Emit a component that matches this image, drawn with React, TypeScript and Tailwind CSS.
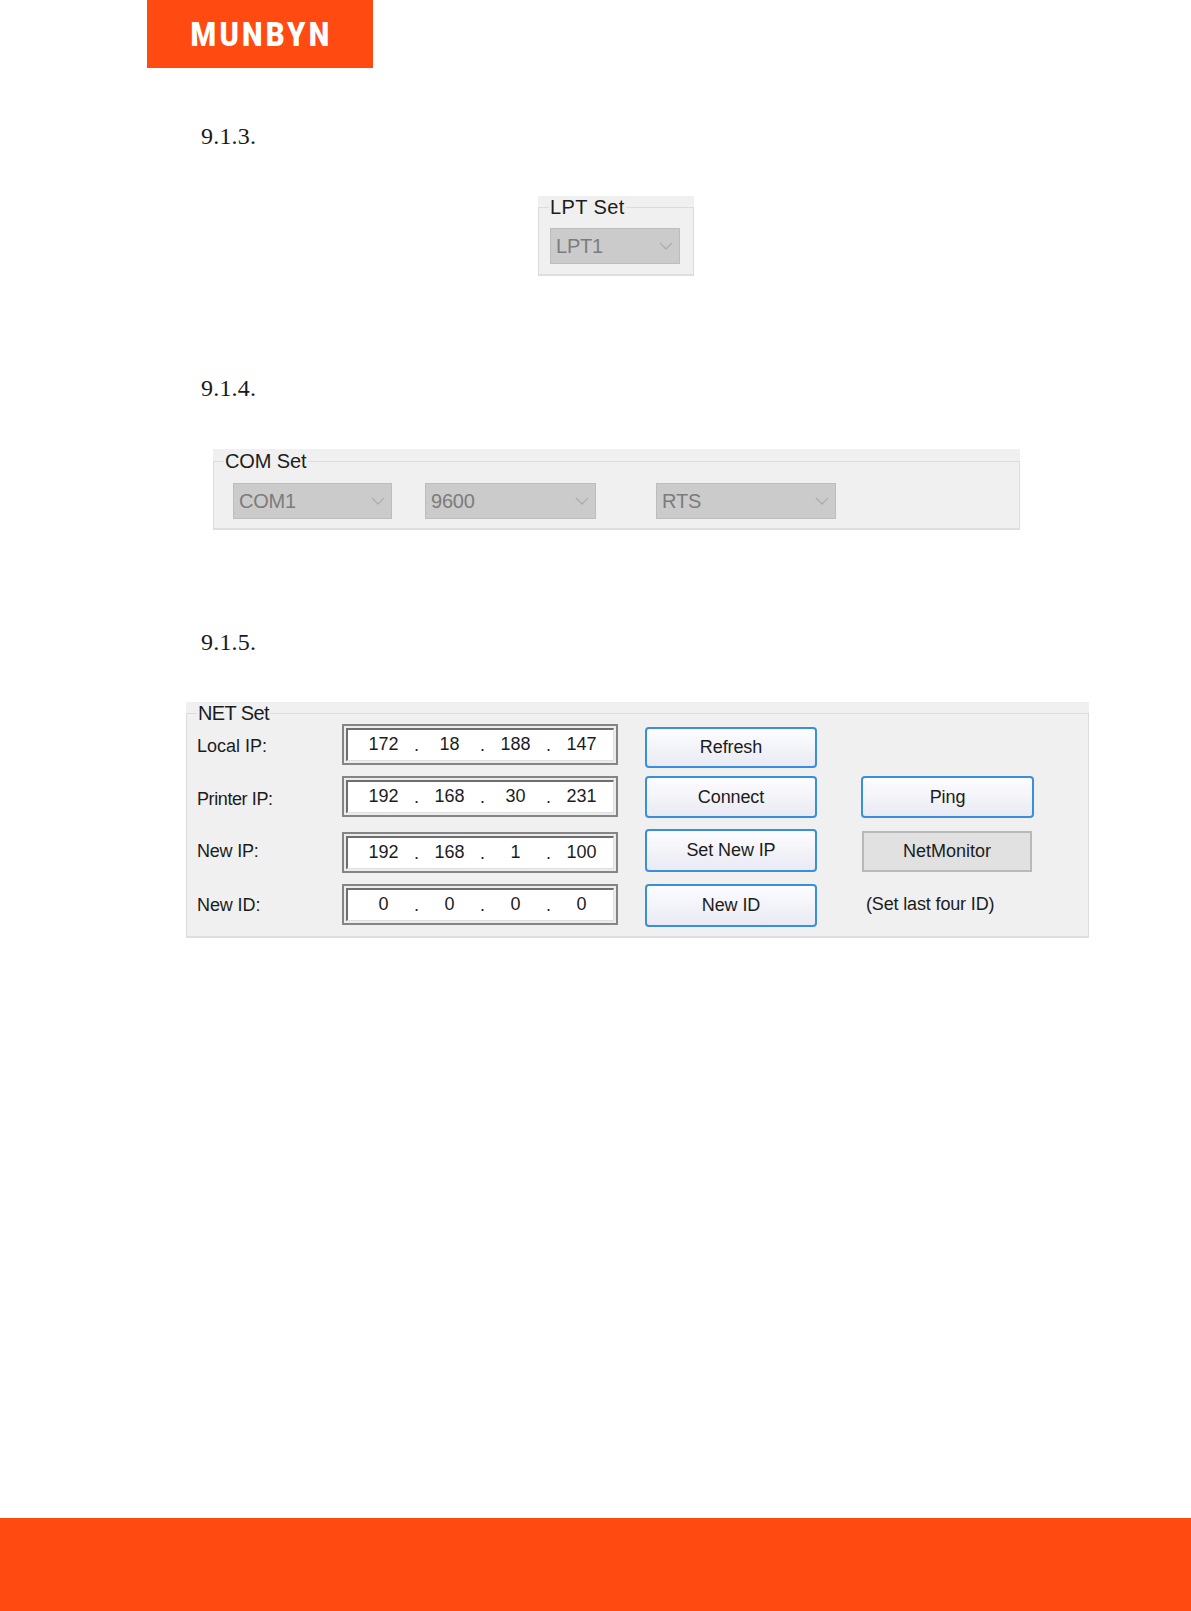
import type { ReactNode } from "react"

const sans = "font-['Liberation_Sans',Arial,sans-serif]"

function Chevron() {
  return (
    <svg width="14" height="8" viewBox="0 0 14 8" fill="none" className="shrink-0">
      <polyline points="1,1 7,7 13,1" stroke="#adadad" strokeWidth="1.3" />
    </svg>
  )
}

function Combo({ label, width, gap }: { label: string; width: string; gap?: string }) {
  return (
    <div className={`${width} ${gap ?? ""} h-[36px] flex items-center justify-between pl-[5px] pr-[6px] bg-[#cbcbcb] border border-[#bdbdbd] text-[20px] tracking-[-0.2px] text-[#7c7c7c]`}>
      <span>{label}</span>
      <Chevron />
    </div>
  )
}

function GroupBox({ title, className, legendClass, children }: { title: string; className: string; legendClass: string; children: ReactNode }) {
  return (
    <div className={`${className} bg-[#f0f0f0] border-b-2 border-[#dedede] ${sans}`}>
      <fieldset className="h-full border-t border-l border-r border-[#dcdcdc] min-w-0">
        <legend className={`${legendClass} ml-[10px] px-[1px] text-[20px] text-[#1c1c1c]`}>{title}</legend>
        {children}
      </fieldset>
    </div>
  )
}

function IpField({ values, top }: { values: string[]; top?: string }) {
  return (
    <div className={`${top ?? ""} w-[276px] h-[41px] border-2 border-[#858585] p-[2px] bg-[#ececec] shrink-0`}>
      <div className="h-full flex justify-center items-center pl-[4px] bg-white border-t-2 border-l-2 border-t-[#6e6e6e] border-l-[#6e6e6e] border-b border-r border-b-[#e0e0e0] border-r-[#e0e0e0] text-[18px] text-[#1c1c1c]">
        {values.map((v, i) => (
          <div key={i} className="flex items-center">
            {i > 0 && <span className="w-[10px] text-center">.</span>}
            <span className="w-[56px] text-center -mt-[2px]">{v}</span>
          </div>
        ))}
      </div>
    </div>
  )
}

function BlueButton({ label, className }: { label: string; className: string }) {
  return (
    <div className={`${className} flex items-center justify-center rounded-[4px] border-2 border-[#3a8fdc] bg-gradient-to-b from-[#fdfdff] to-[#e9eaf3] text-[18px] tracking-[-0.1px] text-[#1c1c1c] shrink-0`}>
      {label}
    </div>
  )
}

function NetRow({ label, labelClass, values, fieldTop, button, extra, rowMt }: { label: string; labelClass: string; values: string[]; fieldTop?: string; button: ReactNode; extra?: ReactNode; rowMt: string }) {
  return (
    <div className={`${rowMt} flex items-start`}>
      <div className={`${labelClass} w-[145px] h-[41px] flex items-center text-[18px] text-[#1c1c1c] shrink-0`}>{label}</div>
      <IpField values={values} top={fieldTop} />
      {button}
      {extra}
    </div>
  )
}

function Heading({ children, className }: { children: string; className: string }) {
  return <p className={`${className} ml-[201px] text-[24px] leading-[28px] tracking-[0.2px] text-[#1a1a1a] font-['Liberation_Serif','Times_New_Roman',serif]`}>{children}</p>
}

export default function App() {
  return (
    <div className="w-[1191px] h-[1611px] bg-white flex flex-col overflow-hidden">
      <div className="ml-[147px] w-[226px] h-[68px] pl-[3px] bg-[#ff4a12] flex items-center justify-center shrink-0">
        <span className="font-['Roboto',sans-serif] font-black text-[34px] leading-none tracking-[0.11em] text-white scale-x-[0.86] whitespace-nowrap">MUNBYN</span>
      </div>

      <Heading className="mt-[54px]">9.1.3.</Heading>
      <GroupBox title="LPT Set" legendClass="h-[22px] leading-[22px] tracking-[0.4px]" className="mt-[46px] ml-[538px] w-[156px] h-[80px]">
        <div className="pl-[11px] pt-[10px]">
          <Combo label="LPT1" width="w-[130px]" />
        </div>
      </GroupBox>

      <Heading className="mt-[98px]">9.1.4.</Heading>
      <GroupBox title="COM Set" legendClass="h-[24px] leading-[24px] tracking-[-0.1px]" className="mt-[47px] ml-[213px] w-[807px] h-[81px]">
        <div className="flex pl-[19px] pt-[10px]">
          <Combo label="COM1" width="w-[159px]" />
          <Combo label="9600" width="w-[171px]" gap="ml-[33px]" />
          <Combo label="RTS" width="w-[180px]" gap="ml-[60px]" />
        </div>
      </GroupBox>

      <Heading className="mt-[98px]">9.1.5.</Heading>
      <GroupBox title="NET Set" legendClass="h-[22px] leading-[22px] tracking-[-0.6px]" className="mt-[46px] ml-[186px] w-[903px] h-[236px]">
        <div className="pl-[10px]">
          <NetRow
            rowMt="mt-[0px]"
            label="Local IP:"
            labelClass="mt-[2px]"
            values={["172", "18", "188", "147"]}
            button={<BlueButton label="Refresh" className="ml-[27px] mt-[3px] w-[172px] h-[41px]" />}
          />
          <NetRow
            rowMt="mt-[8px]"
            label="Printer IP:"
            labelClass="mt-[3px] tracking-[-0.4px]"
            values={["192", "168", "30", "231"]}
            button={<BlueButton label="Connect" className="ml-[27px] w-[172px] h-[42px]" />}
            extra={<BlueButton label="Ping" className="ml-[44px] w-[173px] h-[42px]" />}
          />
          <NetRow
            rowMt="mt-[9px]"
            label="New IP:"
            labelClass="mt-[2px] tracking-[-0.2px]"
            values={["192", "168", "1", "100"]}
            fieldTop="mt-[3px]"
            button={<BlueButton label="Set New IP" className="ml-[27px] w-[172px] h-[43px]" />}
            extra={
              <div className="ml-[45px] mt-[2px] w-[170px] h-[41px] flex items-center justify-center bg-[#e1e1e1] border-2 border-[#b9b9b9] text-[18px] text-[#1c1c1c]">
                NetMonitor
              </div>
            }
          />
          <NetRow
            rowMt="mt-[11px]"
            label="New ID:"
            labelClass="mt-[1px] tracking-[-0.1px]"
            values={["0", "0", "0", "0"]}
            button={<BlueButton label="New ID" className="ml-[27px] w-[172px] h-[43px]" />}
            extra={<div className="ml-[49px] h-[41px] flex items-center text-[18px] tracking-[-0.15px] text-[#1c1c1c] whitespace-nowrap">(Set last four ID)</div>}
          />
        </div>
      </GroupBox>

      <div className="mt-auto h-[93px] bg-[#ff4a12] shrink-0" />
    </div>
  )
}
